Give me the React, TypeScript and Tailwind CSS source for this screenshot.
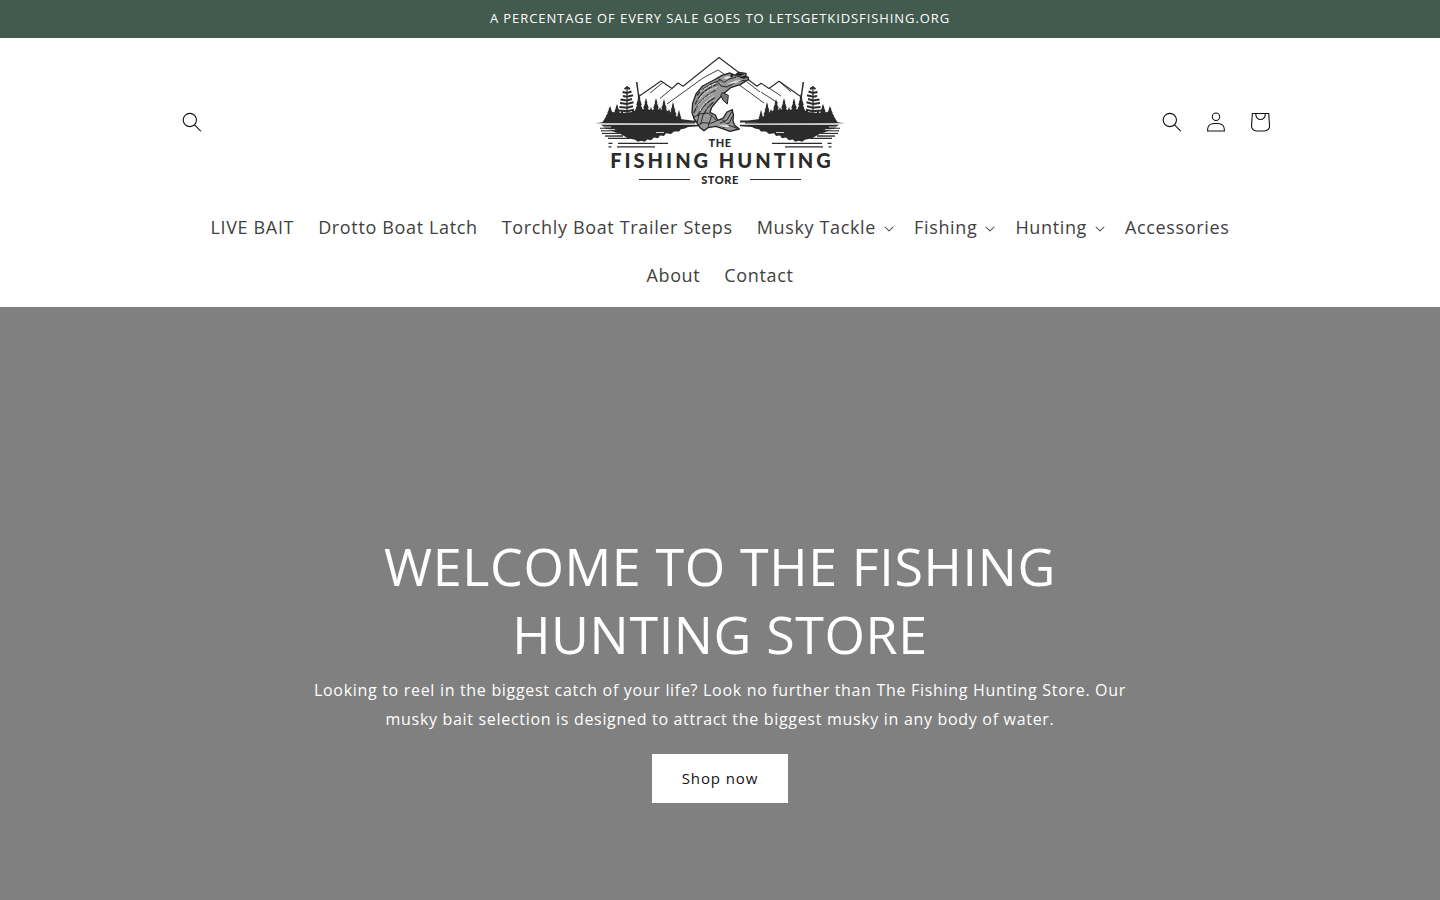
import React from "react";

interface NavItem {
  label: string;
  menu?: boolean;
}

const navItems: NavItem[] = [
  { label: "LIVE BAIT" },
  { label: "Drotto Boat Latch" },
  { label: "Torchly Boat Trailer Steps" },
  { label: "Musky Tackle", menu: true },
  { label: "Fishing", menu: true },
  { label: "Hunting", menu: true },
  { label: "Accessories" },
  { label: "About" },
  { label: "Contact" },
];

function SearchIcon() {
  return (
    <svg viewBox="0 0 18 19" className="h-5 w-5" fill="currentColor" aria-hidden="true">
      <path
        fillRule="evenodd"
        clipRule="evenodd"
        d="M11.03 11.68A5.784 5.784 0 112.85 3.5a5.784 5.784 0 018.18 8.18zm.26 1.12a6.78 6.78 0 11.72-.7l5.4 5.4a.5.5 0 11-.71.7l-5.41-5.4z"
      />
    </svg>
  );
}

function AccountIcon() {
  return (
    <svg viewBox="0 0 18 19" className="h-5 w-5" fill="currentColor" aria-hidden="true">
      <path
        fillRule="evenodd"
        clipRule="evenodd"
        d="M6 4.5a3 3 0 116 0 3 3 0 01-6 0zm3-4a4 4 0 100 8 4 4 0 000-8zm5.58 12.15c1.12.82 1.83 2.24 1.91 4.85H1.51c.08-2.6.79-4.03 1.9-4.85C4.66 11.75 6.5 11.5 9 11.5s4.35.26 5.58 1.15zM9 10.5c-2.5 0-4.65.24-6.17 1.35C1.27 12.98.5 14.93.5 18v.5h17V18c0-3.07-.77-5.02-2.33-6.15-1.52-1.1-3.67-1.35-6.17-1.35z"
      />
    </svg>
  );
}

function CartIcon() {
  return (
    <svg viewBox="0 0 40 40" className="h-11 w-11" fill="currentColor" aria-hidden="true">
      <path
        fillRule="evenodd"
        d="M15.75 11.8h-3.16l-.77 11.6a5 5 0 004.99 5.34h7.38a5 5 0 004.99-5.33L28.4 11.8zm0 1h-2.22l-.71 10.67a4 4 0 003.99 4.27h7.38a4 4 0 004-4.27l-.72-10.67h-2.22v.63a4.75 4.75 0 11-9.5 0zm8.5 0h-7.5v.63a3.75 3.75 0 107.5 0z"
      />
    </svg>
  );
}

function CaretIcon() {
  return (
    <svg viewBox="0 0 10 6" className="mt-1 h-[6px] w-[10px]" fill="currentColor" aria-hidden="true">
      <path
        fillRule="evenodd"
        d="M9.354.646a.5.5 0 00-.708 0L5 4.293 1.354.646a.5.5 0 00-.708.708l4 4a.5.5 0 00.708 0l4-4a.5.5 0 000-.708z"
      />
    </svg>
  );
}

// Jagged evergreen silhouette
function pine(x: number, top: number, half: number, base = 123) {
  const steps = 5;
  const h = base - top;
  const left: string[] = [];
  const right: string[] = [];
  for (let i = 1; i <= steps; i++) {
    const y = top + (h * i) / steps;
    const w = (half * i) / steps;
    left.unshift(`${x - w * 0.7},${y}`, `${x - w},${y}`);
    right.push(`${x + w},${y}`, `${x + w * 0.7},${y}`);
  }
  return [`${x},${top}`, ...right, ...left].join(" ");
}

const pines: [number, number, number][] = [
  [610, 106, 7],
  [617, 104, 7],
  [622, 110, 6],
  [633, 109, 6],
  [639, 93, 7],
  [646, 98, 7],
  [651, 107, 6],
  [656, 98, 7],
  [660, 107, 6],
  [664, 99, 7],
  [669, 109, 6],
  [673, 102, 6],
  [679, 110, 4],
];

// Half of the shoreline, mirrored for the other side
function Shore() {
  return (
    <g fill="#2b2b2b" stroke="none">
      {pines.map(([x, top, half]) => (
        <polygon key={x} points={pine(x, top, half)} />
      ))}
      <path d="M602 123l5-8 5-3 10 1 10-1 6-3 30 2 6 4 6 4 12 1.500 8 0v2z" />
      <path d="M595 123.200l8-.9h92v1.200z" />
      <path d="M627 86v27" stroke="#2b2b2b" strokeWidth="1.200" />
      <path
        d="M624.500 89l2.500-1.500 3 1.500M622.500 92l4.500 1 4.500-1.500M623 96l4 .8 6-1.500M620.500 99.500l6.500 1 5-1.500M620 103l7 1 6.500-1.800M619.500 107l7.500 .8 6-1.500M619 110.500l8 .7 7-1.500"
        fill="none"
        stroke="#2b2b2b"
        strokeWidth="2"
      />
      <path d="M635.900 82l1.600 0 2 16-1.300 0z" />
      <path d="M600 124.800h100v1.400l-12 .8-3 1.500-4 .7-2 2.200-5 .2-3 2.300-5-.6-2 2.800-4-.5-2 2.600-4-.6-3 2.700-4-.8-2 2.300-4-1-3 1-3-2-7-1.500-7-4-8-3-8-3-3-3z" />
      <path
        d="M600 128.200h18M601 130.800h18M602 133.400h17M605 136h18M608 138.400h22"
        stroke="#2b2b2b"
        strokeWidth="1.300"
      />
      <path
        d="M600 127h11M602 129.600h13M602 132.200h11M605 134.700h12M656 132.500h8"
        stroke="#fff"
        strokeWidth=".8"
      />
      <path
        d="M608.500 143.300h4M618 143.300h50M608.500 146.800h3M617 146.800h38"
        stroke="#2b2b2b"
        strokeWidth="1.300"
      />
    </g>
  );
}

function Fish() {
  return (
    <g transform="translate(680 60) scale(.3333)" strokeLinejoin="round" strokeLinecap="round">
      <path
        d="M198 40L176 37 166 46 150 39 126 46 102 60 68 78 49 100 38 130 36 158 42 176 48 184 62 205 72 212 84 203 108 199 130 207 150 214 178 207 164 196 159 184 160 165 157 149 141 156 129 175 113 181 106 165 90 157 95 142 112 122 134 98 152 83 180 74 206 58 204 51 190 54 182 52 198 48z"
        fill="#999"
        stroke="#222"
        strokeWidth="4"
      />
      <path d="M128 98l17 8-3 26-13-11-6-14z" fill="#777" stroke="#222" strokeWidth="3" />
      <path
        d="M52 105C68 84 90 73 120 60M46 132C59 102 77 87 112 73M42 158C54 128 70 112 105 92M54 166C66 142 78 128 105 113M73 161C78 147 89 135 103 125"
        fill="none"
        stroke="#333"
        strokeWidth="4"
        strokeDasharray="13 6 7 4"
      />
      <path
        d="M61 94C75 85 90 78 108 68M59 116C74 96 88 90 109 82M53 138C65 120 76 112 97 100M60 151C70 132 84 120 101 108"
        fill="none"
        stroke="#ddd"
        strokeWidth="3"
        strokeDasharray="9 5"
      />
      <path
        d="M42 171l21-10 21-2 16 12 10 12-18 7-23-2-14 6M57 164l-5 23M70 162l-8 30M94 170l-10 31"
        fill="none"
        stroke="#292929"
        strokeWidth="3"
      />
      <path
        d="M112 64l11 14 18 3 15-8 17-9 22-3M117 57l15 10 15-10 20-5M166 47l18 5M120 190l21-10 14-24M124 197l24-8 9-19M130 202l21-5 20 8M135 188l-7-8"
        fill="none"
        stroke="#222"
        strokeWidth="3"
      />
      <path
        d="M129 54l14-6 11 2-13 8zM140 73l25-11 22-3-19 10zM116 194l24-1 9 8-15 1z"
        fill="#ddd"
      />
      <path d="M172 39l24 2-15 7-14-2z" fill="#222" />
      <circle cx="155" cy="47" r="4" fill="#111" />
    </g>
  );
}

function Logo() {
  return (
    <svg
      viewBox="595 52 250 140"
      className="h-[140px] w-[250px]"
      role="img"
      aria-label="The Fishing Hunting Store"
    >
      <g fill="none" stroke="#2b2b2b" strokeWidth="1.100" strokeLinejoin="round">
        <path d="M638 97l23-16 11 7.500 6-5.500 5 3.200 36-28.700 38 28.700 4-3 8 5.300 10-7.300 22 15.500" />
        <path
          d="M663 82.500l-13 10.500M672 88.500l-12 10M667 104l36-26 15-8 6 4M738 84l26 19M747 82l13 10M780 82l11 10M769 88l12 8M761 92l17 11"
          strokeWidth=".9"
        />
      </g>
      <Shore />
      <g transform="translate(1440 0) scale(-1 1)">
        <Shore />
      </g>
      <Fish />
      <g
        fill="#2b2b2b"
        textAnchor="middle"
        className="font-['Lato',sans-serif] font-black"
      >
        <text x="720" y="147" className="text-[11px] tracking-wider">THE</text>
        <text x="722" y="168" className="text-[20px] tracking-[3px]">FISHING HUNTING</text>
        <text x="720" y="184" className="text-[11px] tracking-wider">STORE</text>
      </g>
      <path d="M639 179.500h51M750 179.500h51" stroke="#2b2b2b" strokeWidth="1.200" />
    </svg>
  );
}

export default function App() {
  return (
    <div className="min-h-screen bg-white font-['Open_Sans',sans-serif] text-[#121212]">
      <div className="flex min-h-[38px] items-center justify-center bg-[#435a4f] px-4 pb-0.5">
        <p className="text-center text-[13px] leading-[22px] tracking-[0.07em] text-white">
          A PERCENTAGE OF EVERY SALE GOES TO LETSGETKIDSFISHING.ORG
        </p>
      </div>

      <header className="mx-auto max-w-[1200px] px-[50px] pt-[14px] pb-2">
        <div className="grid grid-cols-[1fr_auto_1fr] items-center">
          <button type="button" aria-label="Search" className="flex h-11 w-11 items-center justify-center">
            <SearchIcon />
          </button>
          <a href="#">
            <Logo />
          </a>
          <div className="-mr-3 flex justify-end">
            <button type="button" aria-label="Search" className="flex h-11 w-11 items-center justify-center">
              <SearchIcon />
            </button>
            <a href="#" aria-label="Log in" className="flex h-11 w-11 items-center justify-center">
              <AccountIcon />
            </a>
            <a href="#" aria-label="Cart" className="flex h-11 w-11 items-center justify-center">
              <CartIcon />
            </a>
          </div>
        </div>

        <nav className="mt-[11px]">
          <ul className="flex flex-wrap justify-center text-lg leading-6 tracking-[0.036em] text-[#414141]">
            {navItems.map((item) => (
              <li key={item.label}>
                {item.menu ? (
                  <button type="button" aria-haspopup="true" className="flex items-center gap-2 py-3 pr-2 pl-3 tracking-[0.036em]">
                    <span>{item.label}</span>
                    <CaretIcon />
                  </button>
                ) : (
                  <a href="#" className="block p-3">
                    {item.label}
                  </a>
                )}
              </li>
            ))}
          </ul>
        </nav>
      </header>

      {/* Hero banner */}
      <section className="flex min-h-[720px] items-center justify-center bg-[#808080] px-12 text-center text-white">
        <div className="max-w-[820px]">
          <h2 className="text-[52px] leading-[68px] tracking-[0.012em]">
            WELCOME TO THE FISHING HUNTING STORE
          </h2>
          <p className="mt-2 leading-[29px] tracking-[0.043em]">
            Looking to reel in the biggest catch of your life? Look no further than The Fishing Hunting Store. Our musky
            bait selection is designed to attract the biggest musky in any body of water.
          </p>
          <button type="button" className="mt-5 bg-white px-[30px] py-3 text-[15px] leading-[25px] tracking-[0.06em] text-[#121212]">
            Shop now
          </button>
        </div>
      </section>
    </div>
  );
}
